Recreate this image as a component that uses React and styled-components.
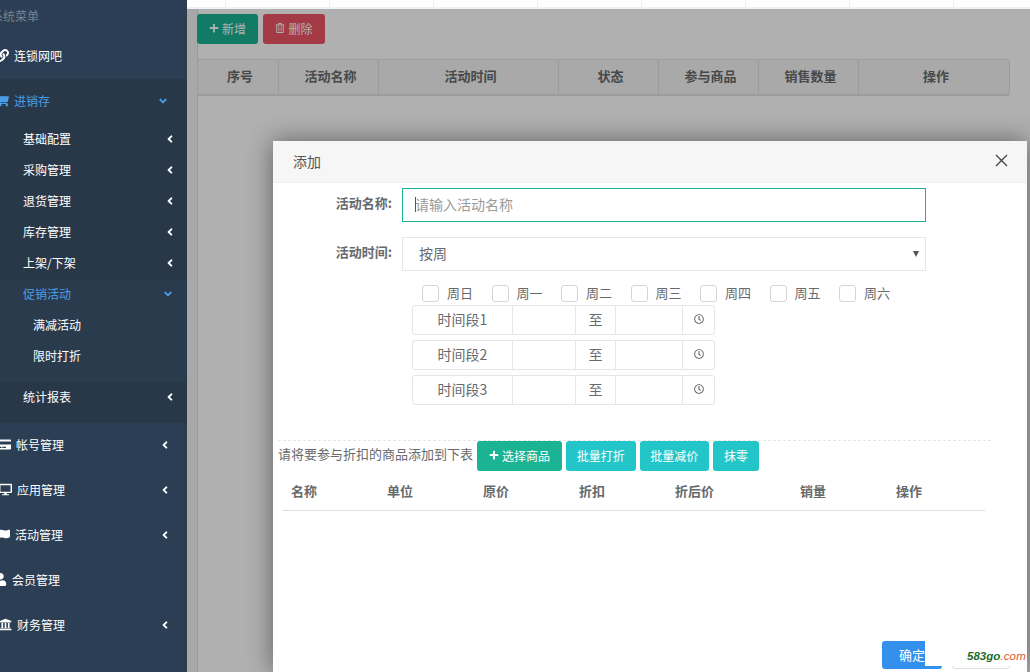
import React from 'react';
import styled, { createGlobalStyle } from 'styled-components';
import {
  FaLink, FaShoppingCart, FaCreditCard, FaDesktop, FaFlag, FaUser, FaUniversity,
  FaAngleLeft, FaAngleDown, FaPlus, FaRegTrashAlt, FaRegClock,
} from 'react-icons/fa';

const GlobalStyle = createGlobalStyle`
  html, body { margin: 0; height: 100%; overflow: hidden; }
  #root { height: 100%; }
  body { font-family: "Noto Sans CJK SC", "Liberation Sans", sans-serif; font-size: 13px; color: #676a6c; }
  * { box-sizing: border-box; }
`;

const Page = styled.div`
  display: flex;
  width: 1030px;
  height: 672px;
  overflow: hidden;
`;

const Sidebar = styled.nav`
  flex: 0 0 187px;
  background: #2b3e54;
  color: #fff;
  font-size: 12px;
  overflow: hidden;
`;

const MenuTitle = styled.div`
  height: 34px;
  line-height: 32px;
  margin-left: -9px;
  font-size: 12px;
  color: #77858f;
`;

const TopRow = styled.div`
  display: flex;
  align-items: center;
  height: 45px;
  padding: 0 16px 2px 0;
  color: ${({ $active }) => ($active ? '#4a9ee8' : '#fff')};
`;

const RowIcon = styled.span`
  display: flex;
  justify-content: flex-end;
  flex: 0 0 ${({ $w }) => $w}px;
  min-width: 0;
  margin-right: 5px;
  font-size: 13px;
  svg { flex-shrink: 0; }
`;

const RowText = styled.span`
  flex: 1;
`;

const Chevron = styled.span`
  display: flex;
  font-size: 12px;
  margin-right: ${({ $active }) => ($active ? 2 : 0)}px;
  color: ${({ $active }) => ($active ? '#4a9ee8' : '#fff')};
`;

const Submenu = styled.div`
  background: #293849;
  padding-bottom: 10px;
`;

const SubRow = styled.div`
  display: flex;
  align-items: center;
  height: 31px;
  padding: 0 11px 2px 23px;
  color: ${({ $active }) => ($active ? '#4a9ee8' : '#fff')};
`;

const OpenGroup = styled.div`
  background: #2a3b4e;
  padding-bottom: 10px;
`;

const LeafRow = styled.div`
  height: 31px;
  line-height: 29px;
  padding-left: 33px;
`;

const Main = styled.main`
  flex: 1;
  display: flex;
  flex-direction: column;
  min-width: 0;
`;

const TopStrip = styled.div`
  flex: 0 0 9px;
  display: grid;
  grid-template-columns: 39px repeat(8, 104px);
  background: #fff;
  border-bottom: 2px solid #eef2f6;
`;

const StripCell = styled.div`
  border-right: 1px solid #eeeeee;
`;

const Workspace = styled.div`
  position: relative;
  flex: 1;
  min-height: 0;
  padding-left: 10px;
  background: #f3f3f4;
  overflow: hidden;
`;

const Panel = styled.div`
  height: 100%;
  padding-top: 5px;
  background: #fff;
  border-left: 1px solid #e0e0e0;
`;

const Toolbar = styled.div`
  display: flex;
  gap: 5px;
  margin-left: -1px;
`;

const Button = styled.div`
  display: flex;
  align-items: center;
  justify-content: center;
  gap: 3px;
  width: ${({ $w }) => $w}px;
  height: 30px;
  padding-bottom: 2px;
  border-radius: 3px;
  font-size: 12px;
  color: #fff;
  background: ${({ $bg }) => $bg};
  svg { font-size: 10px; }
`;

const ListTable = styled.div`
  display: grid;
  grid-template-columns: 81px 100px 180px 100px 100px 100px 151px;
  width: 812px;
  height: 37px;
  margin: 15px 0 0 -1px;
  background: #f5f5f6;
  border: 1px solid #e3e3e3;
  border-bottom-width: 2px;
  border-right: 0;
`;

const ListHead = styled.div`
  display: flex;
  align-items: center;
  justify-content: center;
  padding: 0 0 4px 4px;
  border-right: 1px solid #e3e3e3;
  font-size: 13px;
  font-weight: 700;
`;

const Overlay = styled.div`
  position: absolute;
  inset: 0;
  background: rgba(0, 0, 0, 0.31);
`;

const Modal = styled.div`
  position: absolute;
  left: 86px;
  top: 132px;
  bottom: 0;
  width: 754px;
  display: flex;
  flex-direction: column;
  background: #fff;
  box-shadow: 0 0 24px rgba(0, 0, 0, 0.45);
`;

const ModalHead = styled.div`
  flex: 0 0 42px;
  display: flex;
  align-items: center;
  justify-content: space-between;
  padding: 0 19px 2px 20px;
  background: #f6f6f6;
  border-bottom: 1px solid #eeeeee;
  font-size: 14px;
  color: #555;
`;

const Form = styled.div`
  padding-top: 5px;
`;

const FormRow = styled.div`
  display: grid;
  grid-template-columns: 119px 524px;
  column-gap: 10px;
  margin-bottom: 15px;
`;

const Label = styled.label`
  padding-top: 5px;
  text-align: right;
  font-size: 13px;
  font-weight: 700;
  color: #676a6c;
`;

const InputWrap = styled.div`
  position: relative;
  height: 34px;
  &::before {
    content: '';
    position: absolute;
    left: 13px;
    top: 9px;
    width: 1px;
    height: 15px;
    background: #555;
  }
`;

const NameInput = styled.input`
  width: 100%;
  height: 100%;
  padding: 0 12px 2px;
  border: 1px solid #1ab394;
  font: 14px "Noto Sans CJK SC", sans-serif;
  outline: 0;
  &::placeholder { color: #9a9a9a; }
`;

const SelectBox = styled.div`
  position: relative;
  display: flex;
  align-items: center;
  height: 34px;
  padding: 0 0 2px 16px;
  border: 1px solid #e5e6e7;
  font-size: 14px;
  &::after {
    content: '';
    position: absolute;
    right: 6px;
    top: 13px;
    border-left: 3px solid transparent;
    border-right: 3px solid transparent;
    border-top: 6px solid #555;
  }
`;

const WeekRow = styled.div`
  display: flex;
  height: 20px;
  margin: -1px 0 0 149px;
`;

const Day = styled.div`
  display: flex;
  align-items: flex-start;
  flex: 0 0 69.5px;
  gap: 8px;
  font-size: 13px;
  line-height: 15px;
`;

const Box = styled.span`
  width: 17px;
  height: 17px;
  border: 1px solid #d5d5d5;
  border-radius: 3px;
  background: #fff;
`;

const TimeGroups = styled.div`
  display: flex;
  flex-direction: column;
  gap: 5px;
  margin-left: 139px;
`;

const TimeGroup = styled.div`
  display: grid;
  grid-template-columns: 100px 63px 40px 67px 1fr;
  width: 303px;
  height: 30px;
  border: 1px solid #e5e6e7;
  border-radius: 3px;
  font-size: 14px;
`;

const TimeCell = styled.div`
  display: flex;
  align-items: center;
  justify-content: center;
  padding-bottom: 2px;
  border-right: ${({ $last }) => ($last ? 0 : '1px solid #e5e6e7')};
  svg { font-size: 10px; color: #666; }
`;

const GoodsBar = styled.div`
  display: flex;
  align-items: center;
  gap: 4px;
  width: 713px;
  margin: 35px 0 0 5px;
  border-top: 1px dashed #e5e6e7;
`;

const GoodsHint = styled.span`
  padding-bottom: 6px;
  font-size: 13px;
`;

const GoodsHead = styled.div`
  display: grid;
  grid-template-columns: 96px 96px 96px 96px 125px 96px 1fr;
  align-items: center;
  width: 702px;
  height: 40px;
  margin-left: 10px;
  padding: 0 0 0 8px;
  border-bottom: 1px solid #ddd;
  font-size: 13px;
  font-weight: 700;
`;

const Footer = styled.div`
  display: flex;
  justify-content: flex-end;
  gap: 10px;
  margin-top: auto;
  padding: 0 17px 3px 0;
`;

const FootButton = styled.div`
  display: flex;
  align-items: center;
  justify-content: center;
  width: ${({ $w }) => $w}px;
  height: 28px;
  padding-bottom: 1px;
  border-radius: 3px;
  font-size: 13px;
  color: ${({ $plain }) => ($plain ? '#555' : '#fff')};
  background: ${({ $plain }) => ($plain ? '#fff' : '#3390ec')};
  border: ${({ $plain }) => ($plain ? '1px solid #ddd' : 0)};
`;

const Watermark = styled.div`
  position: absolute;
  right: 0;
  bottom: 6px;
  width: 102px;
  height: 26px;
  padding: 10px 0 0 42px;
  background: #fff;
  font: italic 700 11.5px "Liberation Sans", sans-serif;
  color: #1d6b2a;
  white-space: nowrap;
  span { color: #e2572c; font-weight: 400; letter-spacing: 0.2px; }
`;

const subItems = ['基础配置', '采购管理', '退货管理', '库存管理', '上架/下架'];
const lowerItems = [
  { text: '帐号管理', icon: <FaCreditCard />, w: 11, chev: true },
  { text: '应用管理', icon: <FaDesktop />, w: 12, chev: true },
  { text: '活动管理', icon: <FaFlag />, w: 10, chev: true },
  { text: '会员管理', icon: <FaUser />, w: 7, chev: false },
  { text: '财务管理', icon: <FaUniversity />, w: 12, chev: true },
];
const listCols = ['序号', '活动名称', '活动时间', '状态', '参与商品', '销售数量', '操作'];
const days = ['周日', '周一', '周二', '周三', '周四', '周五', '周六'];
const goodsCols = ['名称', '单位', '原价', '折扣', '折后价', '销量', '操作'];

const CloseIcon = () => (
  <svg width="13" height="13" viewBox="0 0 13 13" fill="none" stroke="#444" strokeWidth="1.3">
    <path d="M1 1l11 11M12 1L1 12" />
  </svg>
);

const App = () => {
  return (
    <Page>
      <GlobalStyle />
      <Sidebar>
        <MenuTitle>系统菜单</MenuTitle>
        <TopRow>
          <RowIcon $w={9}><FaLink /></RowIcon>
          <RowText>连锁网吧</RowText>
        </TopRow>
        <Submenu>
          <TopRow $active>
            <RowIcon $w={9}><FaShoppingCart /></RowIcon>
            <RowText>进销存</RowText>
            <Chevron $active><FaAngleDown /></Chevron>
          </TopRow>
          {subItems.map((item) => (
            <SubRow key={item}>
              <RowText>{item}</RowText>
              <Chevron><FaAngleLeft /></Chevron>
            </SubRow>
          ))}
          <OpenGroup>
            <SubRow $active>
              <RowText>促销活动</RowText>
              <Chevron $active><FaAngleDown /></Chevron>
            </SubRow>
            <LeafRow>满减活动</LeafRow>
            <LeafRow>限时打折</LeafRow>
          </OpenGroup>
          <SubRow>
            <RowText>统计报表</RowText>
            <Chevron><FaAngleLeft /></Chevron>
          </SubRow>
        </Submenu>
        {lowerItems.map((item) => (
          <TopRow key={item.text}>
            <RowIcon $w={item.w}>{item.icon}</RowIcon>
            <RowText>{item.text}</RowText>
            {item.chev && <Chevron><FaAngleLeft /></Chevron>}
          </TopRow>
        ))}
      </Sidebar>

      <Main>
        <TopStrip>
          {Array.from({ length: 8 }).map((_, i) => <StripCell key={i} />)}
        </TopStrip>
        <Workspace>
          <Panel>
            <Toolbar>
              <Button $w={61} $bg="#1ab394"><FaPlus /> 新增</Button>
              <Button $w={62} $bg="#ed5565"><FaRegTrashAlt /> 删除</Button>
            </Toolbar>
            <ListTable>
              {listCols.map((col) => <ListHead key={col}>{col}</ListHead>)}
            </ListTable>
          </Panel>
          <Overlay />
          <Modal>
            <ModalHead>
              <span>添加</span>
              <CloseIcon />
            </ModalHead>
            <Form>
              <FormRow>
                <Label>活动名称:</Label>
                <InputWrap>
                  <NameInput readOnly placeholder="请输入活动名称" />
                </InputWrap>
              </FormRow>
              <FormRow>
                <Label>活动时间:</Label>
                <SelectBox>按周</SelectBox>
              </FormRow>
              <WeekRow>
                {days.map((d) => (
                  <Day key={d}><Box />{d}</Day>
                ))}
              </WeekRow>
              <TimeGroups>
                {[1, 2, 3].map((n) => (
                  <TimeGroup key={n}>
                    <TimeCell>时间段{n}</TimeCell>
                    <TimeCell />
                    <TimeCell>至</TimeCell>
                    <TimeCell />
                    <TimeCell $last><FaRegClock /></TimeCell>
                  </TimeGroup>
                ))}
              </TimeGroups>
            </Form>
            <GoodsBar>
              <GoodsHint>请将要参与折扣的商品添加到下表</GoodsHint>
              <Button $w={85} $bg="#1ab394"><FaPlus /> 选择商品</Button>
              <Button $w={69.5} $bg="#23c6c8">批量打折</Button>
              <Button $w={69.5} $bg="#23c6c8">批量减价</Button>
              <Button $w={46} $bg="#23c6c8">抹零</Button>
            </GoodsBar>
            <GoodsHead>
              {goodsCols.map((col) => <span key={col}>{col}</span>)}
            </GoodsHead>
            <Footer>
              <FootButton $w={60}>确定</FootButton>
              <FootButton $w={58} $plain>取消</FootButton>
            </Footer>
            <Watermark>583go<span>.com</span></Watermark>
          </Modal>
        </Workspace>
      </Main>
    </Page>
  );
};

export default App;
